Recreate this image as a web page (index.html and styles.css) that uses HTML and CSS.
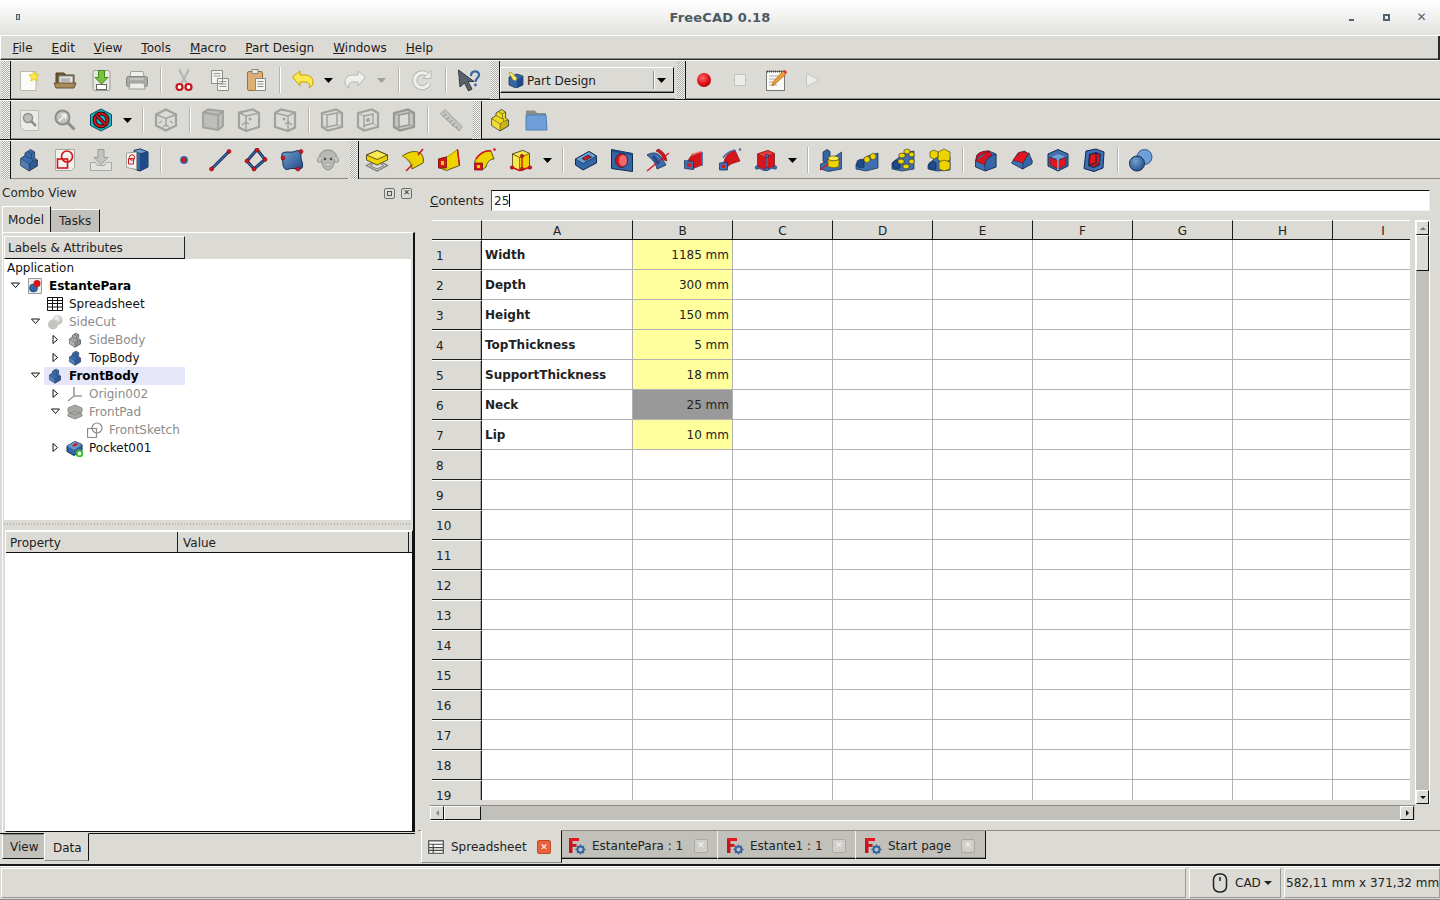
FILE: index.html
```html
<!DOCTYPE html>
<html lang="en">
<head>
<meta charset="utf-8">
<title>FreeCAD 0.18</title>
<link rel="stylesheet" href="styles.css">
</head>
<body>
<svg class="defs" xmlns="http://www.w3.org/2000/svg">
<defs>
<radialGradient id="gRec" cx=".4" cy=".35" r=".7"><stop offset="0" stop-color="#ff6a6a"/><stop offset=".6" stop-color="#e0151b"/><stop offset="1" stop-color="#a00"/></radialGradient>
<linearGradient id="gBlue" x1="0" y1="0" x2="1" y2="1"><stop offset="0" stop-color="#729fcf"/><stop offset="1" stop-color="#204a87"/></linearGradient>
<radialGradient id="gSph" cx=".4" cy=".35" r=".75"><stop offset="0" stop-color="#729fcf"/><stop offset="1" stop-color="#204a87"/></radialGradient>
<radialGradient id="gSph2" cx=".4" cy=".35" r=".75"><stop offset="0" stop-color="#f4f4f2"/><stop offset="1" stop-color="#b0b0ac"/></radialGradient>
</defs>
<symbol id="new" viewBox="0 0 24 24"><path d="M3.500 3.500H19V22.500H3.500Z" fill="#fbfbf8" stroke="#b9b9b2"/><path d="M17 3.500l1.500 3 3.500.5-2.500 2.400.7 3.600-3.200-1.700-3.200 1.700.7-3.600L12 7l3.500-.5z" fill="#fce94f" stroke="#e0c400" stroke-width=".8"/></symbol>
<symbol id="open" viewBox="0 0 24 24"><path d="M3 5h8l2 2h8v9H3z" fill="#6f5632" stroke="#54401f"/><rect x="6" y="8" width="14" height="9" fill="#e6e6e2" stroke="#888"/><path d="M8 11h9M8 13h9" stroke="#888"/><path d="M1 15h22l-2 5H3z" fill="#a98a5a" stroke="#6a5230"/></symbol>
<symbol id="save" viewBox="0 0 24 24"><rect x="4" y="2.500" width="17" height="20" rx="2" fill="#e8e8e3" stroke="#9a9a94"/><rect x="7.500" y="16.500" width="10" height="5" fill="#fff" stroke="#666"/><path d="M9.500 2.500h6v7h3.500l-6.500 6.500L6 9.500h3.500z" fill="#7ac143" stroke="#3d8a13"/></symbol>
<symbol id="print" viewBox="0 0 24 24"><path d="M6 3.500h12l1 5H5z" fill="#f0f0ee" stroke="#a0a09c"/><rect x="1.500" y="8.500" width="21" height="10" rx="2" fill="#a9a9a5" stroke="#82827e"/><path d="M5 15l-1 6h16l-1-6z" fill="#ecece8" stroke="#9a9a96"/><path d="M5 11h14" stroke="#ddd"/></symbol>
<symbol id="cut" viewBox="0 0 24 24"><path d="M7 1.500L15 16M17 1.500L9 16" stroke="#b6b6b2" stroke-width="2.400"/><circle cx="7.500" cy="19" r="3" fill="#fff" stroke="#c8141c" stroke-width="2.200"/><circle cx="16.500" cy="19" r="3" fill="#fff" stroke="#c8141c" stroke-width="2.200"/></symbol>
<symbol id="copy" viewBox="0 0 24 24"><path d="M3.500 2.500h11v13h-11zM9.500 10.500h11v12h-11z" fill="#f4f4f0" stroke="#8c8c88"/><path d="M5.500 5.500h7M5.500 8h7M11.500 13.500h7M11.500 16h7M11.500 18.500h7" stroke="#999"/></symbol>
<symbol id="paste" viewBox="0 0 24 24"><rect x="3.500" y="3.500" width="15" height="19" rx="1.500" fill="#dcb074" stroke="#9a7238"/><rect x="8" y="1.500" width="6" height="4" fill="#e8e8e4" stroke="#888"/><path d="M11.500 10.500h10v12h-10z" fill="#f6f6f4" stroke="#888"/><path d="M13.500 13.500h6M13.500 16h6M13.500 18.500h6" stroke="#888"/></symbol>
<symbol id="undo" viewBox="0 0 24 24"><path d="M1.500 9L9 3v4h5c5 0 8 3 8 7 0 3-2 5-4 6 1-2 1-6-4-6H9v4z" fill="#fce94f" stroke="#c4a000"/></symbol>
<symbol id="redo" viewBox="0 0 24 24"><path d="M22.500 9L15 3v4h-5c-5 0-8 3-8 7 0 3 2 5 4 6-1-2-1-6 4-6h5v4z" fill="#efefec" stroke="#b6b6b2"/></symbol>
<symbol id="refresh" viewBox="0 0 24 24"><path d="M19 15.500a7.500 7.500 0 1 1-1-8" fill="none" stroke="#b4b4b0" stroke-width="5"/><path d="M19 15.500a7.500 7.500 0 1 1-1-8" fill="none" stroke="#f0f0ee" stroke-width="3"/><path d="M21 2.500v8h-8z" fill="#f0f0ee" stroke="#b4b4b0"/></symbol>
<symbol id="help" viewBox="0 0 24 24"><path d="M1.500 2L3 19l4.500-4 4 8 3.500-2-4-7.500H17z" fill="#59616a" stroke="#333b44"/><path d="M14 8c0-6 8-6 8-1 0 3-3.500 3-3.500 7" fill="none" stroke="#3465a4" stroke-width="2.200"/><circle cx="18.500" cy="17" r="1.400" fill="#3465a4"/></symbol>
<symbol id="pdwb" viewBox="0 0 16 16"><path d="M1 5l8-3 6 2v9l-7 3-7-3z" fill="#3465a4" stroke="#0b2a55" stroke-width=".7"/><path d="M9 8l6-4v9l-6 3z" fill="#204a87"/><path d="M1 1l2-1 6 6-1 3-3-1z" fill="#fce94f" stroke="#665" stroke-width=".5"/></symbol>
<symbol id="rec" viewBox="0 0 24 24"><circle cx="12" cy="12" r="7" fill="url(#gRec)"/></symbol>
<symbol id="stop" viewBox="0 0 24 24"><rect x="6.500" y="6.500" width="11" height="11" fill="#ececea" stroke="#c4c4c0"/></symbol>
<symbol id="macro" viewBox="0 0 24 24"><rect x="2.500" y="3.500" width="18" height="19" fill="#fafaf6" stroke="#777"/><path d="M3 3.500h17" stroke="#444" stroke-dasharray="1 1" stroke-width="2"/><path d="M5 8h11M5 11h8M5 14h6M5 17h8" stroke="#aaa"/><path d="M8 18l1-4L19 3l3 3-11 10z" fill="#f09d33" stroke="#a8641a" stroke-width=".7"/><path d="M19 3l3 3 1-2-2-2z" fill="#d33"/></symbol>
<symbol id="play" viewBox="0 0 24 24"><path d="M6.500 5.500L19 12 6.500 18.500z" fill="#ededea" stroke="#c4c4c0"/></symbol>
<symbol id="fitall" viewBox="0 0 24 24"><path d="M3.500 2.500h18v20H7l-3.500-3z" fill="#eaeae6" stroke="#bcbcb8"/><circle cx="11" cy="10" r="4.500" fill="#bdbdb9" stroke="#8e8e8a" stroke-width="1.500"/><path d="M14 13l5 5" stroke="#8e8e8a" stroke-width="2.500"/></symbol>
<symbol id="fitsel" viewBox="0 0 24 24"><circle cx="9.500" cy="9.500" r="7" fill="#c2c2be" stroke="#8e8e8a" stroke-width="2"/><path d="M14.500 14.500l7 7" stroke="#8e8e8a" stroke-width="3"/><path d="M6 13l6-6M8 6.500h4.500V11" fill="none" stroke="#f4f4f2" stroke-width="1.600"/></symbol>
<symbol id="style" viewBox="0 0 24 24"><path d="M12 1l10.500 5.500v11L12 23 1.500 17.500v-11z" fill="#1fb3c2" stroke="#0a4a55"/><circle cx="12" cy="12" r="6.500" fill="none" stroke="#111" stroke-width="4"/><circle cx="12" cy="12" r="6.500" fill="none" stroke="#d5141c" stroke-width="2.200"/><path d="M7.500 7.500l9 9" stroke="#111" stroke-width="3.500"/><path d="M7.500 7.500l9 9" stroke="#d5141c" stroke-width="2"/></symbol>
<symbol id="viso" viewBox="0 0 24 24"><path d="M12 1.500l10 5v11l-10 5-10-5v-11z" fill="none" stroke="#a2a29e" stroke-width="2.200"/><path d="M2 6.500l10 4 10-4M12 10.500v6M5 15l3-2M19 15l-3-2M9 19l3-2 3 2" fill="none" stroke="#a2a29e" stroke-width="1.500"/></symbol>
<symbol id="vfront" viewBox="0 0 24 24"><path d="M2 4.500l5-3 15 1.500v15l-5 4-15-2.500z" fill="#bdbdb9" stroke="#a0a09c" stroke-width="1.800"/><path d="M2 4.500l15 2.500v15.500M17 7l5-4" fill="none" stroke="#a0a09c" stroke-width="1.800"/></symbol>
<symbol id="vtop" viewBox="0 0 24 24"><path d="M2 4.500l14-3 6 3.500v14l-13 4-7-3.500z" fill="none" stroke="#a2a29e" stroke-width="2.200"/><path d="M2 4.500l7 3.500 13-3M9 8v15M5 17l4-3 3 2" fill="none" stroke="#a2a29e" stroke-width="1.500"/><circle cx="13" cy="11" r="1.500" fill="#a2a29e"/></symbol>
<symbol id="vright" viewBox="0 0 24 24"><path d="M22 4.500l-14-3-6 3.500v14l13 4 7-3.500z" fill="none" stroke="#a2a29e" stroke-width="2.200"/><path d="M22 4.500l-7 3.500L2 5M15 8v15M19 17l-4-3-3 2" fill="none" stroke="#a2a29e" stroke-width="1.500"/><circle cx="11" cy="11" r="1.500" fill="#a2a29e"/></symbol>
<symbol id="vrear" viewBox="0 0 24 24"><path d="M2 5l14-3.500 6 3.500v14l-14 3.500L2 19z" fill="none" stroke="#a2a29e" stroke-width="2.200"/><path d="M7 7l10-2v12L7 19z" fill="none" stroke="#a2a29e" stroke-width="1.500"/><path d="M2 5l5 2M22 5l-5 0M22 19l-5-2M2 19l5 0" stroke="#a2a29e"/></symbol>
<symbol id="vbot" viewBox="0 0 24 24"><path d="M2 5l14-3.500 6 3.500v14l-14 3.500L2 19z" fill="none" stroke="#a2a29e" stroke-width="2.200"/><path d="M8 8l9-2v9l-9 3z" fill="none" stroke="#a2a29e" stroke-width="1.500"/><circle cx="12" cy="12" r="2" fill="#a2a29e"/><path d="M2 5l6 3M22 19l-5-4M8 22.500V18" stroke="#a2a29e"/></symbol>
<symbol id="vleft" viewBox="0 0 24 24"><path d="M2 5l14-3.500 6 3.500v14l-14 3.500L2 19z" fill="#c6c6c2" stroke="#969692" stroke-width="2.200"/><path d="M7 7l10-2v12L7 19z" fill="#dcdad5" stroke="#969692" stroke-width="1.500"/><path d="M2 5l5 2M22 5l-5 0M22 19l-5-2M2 19l5 0" stroke="#969692"/></symbol>
<symbol id="ruler" viewBox="0 0 24 24"><path d="M1.500 6L6 1.500l17 17-3 4.500z" fill="#c2c2be" stroke="#a0a09c"/><path d="M7 6l-2 2M10 9l-3 3M13 12l-2 2M16 15l-3 3M19 18l-2 2" stroke="#8e8e8a"/></symbol>
<symbol id="step" viewBox="-3 0 30 24" preserveAspectRatio="none"><path d="M10 3.500L14 1.500l5 2.500v6l3.500 2v6L12 23 1.500 17.500v-7L7 7.500V5z" fill="currentColor" stroke="#1a2430" stroke-opacity=".8"/><path d="M12 23v-7L1.500 10.500M12 16l4.500-2.500v-3.500M22.500 12l-6 1.500M10 3.500l5 2.500 4-2M15 6v5L7 7.500" fill="none" stroke="#1a2430" stroke-opacity=".55"/><path d="M12 16l10.500-4v6.500L12 23z" fill="#000" fill-opacity=".16"/><path d="M1.500 10.500L12 16v7L1.500 17.500z" fill="#fff" fill-opacity=".12"/></symbol>
<symbol id="folder" viewBox="0 0 24 24"><path d="M2 2.500h9l2 2.500h9v7H2z" fill="#8c8c88"/><path d="M2 7h20l1 15H2z" fill="#6f9fd8" stroke="#4e7fb8"/></symbol>
<symbol id="sketch" viewBox="0 0 24 24"><path d="M2.500 1.500h19v18l-3 3h-16z" fill="#f2f2ee" stroke="#a8a8a4"/><rect x="4.500" y="11" width="10" height="9" fill="none" stroke="#d5141c" stroke-width="1.600"/><circle cx="14" cy="8.500" r="5.500" fill="none" stroke="#d5141c" stroke-width="1.600"/></symbol>
<symbol id="import" viewBox="0 0 24 24"><path d="M9 1.500h6v8h4l-7 7-7-7h4z" fill="#c4c4c0" stroke="#9a9a96"/><path d="M1.500 14.500v8h21v-8h-5l-2 3H8.500l-2-3z" fill="#e2e2de" stroke="#a6a6a2"/></symbol>
<symbol id="pagecube" viewBox="0 0 24 24"><path d="M9 2.500l6-1.500 8 3v15l-8 4-6-2z" fill="#3465a4" stroke="#10294f"/><path d="M15 5.500l8-1.500v15l-8 4z" fill="#204a87"/><path d="M9 2.500l6 3 8-1.500-8-3z" fill="#729fcf" stroke="#10294f" stroke-width=".6"/><path d="M1.500 5l10-1v17.500l-10-2z" fill="#f2f2ee" stroke="#a0a09c"/><path d="M3.500 10.500h5v5.500h-5z" fill="none" stroke="#d5141c"/><circle cx="7" cy="9.500" r="2.700" fill="none" stroke="#d5141c"/></symbol>
<symbol id="point" viewBox="0 0 24 24"><circle cx="12" cy="12" r="3.200" fill="#c8141c" stroke="#3d68a6" stroke-width="1.600"/></symbol>
<symbol id="line" viewBox="0 0 24 24"><path d="M3.500 21L21 3.500" stroke="#10294f" stroke-width="3"/><path d="M3.500 21L21 3.500" stroke="#3d68a6" stroke-width="1.600"/><circle cx="3.500" cy="21" r="2" fill="#d5141c" stroke="#7a0f12" stroke-width=".6"/><circle cx="21" cy="3.500" r="2" fill="#d5141c" stroke="#7a0f12" stroke-width=".6"/></symbol>
<symbol id="cs" viewBox="0 0 24 24"><path d="M3 13L13 1.500 21 11.500 10 21z" fill="none" stroke="#10294f" stroke-width="3"/><path d="M3 13L13 1.500 21 11.500 10 21z" fill="none" stroke="#3d68a6" stroke-width="1.400"/><g fill="#d5141c" stroke="#7a0f12" stroke-width=".6"><circle cx="13" cy="2" r="2"/><circle cx="21" cy="11.500" r="2"/><circle cx="10" cy="21" r="2"/><circle cx="3" cy="13" r="2"/></g></symbol>
<symbol id="plane" viewBox="0 0 24 24"><path d="M2 5.500c4-3 9 0 14-2.500 3-1 5 0 5 3-1 6 3 9 1 14-4 3-9-1-13 1-4 2-6-2-6-5 0-4-2-6-1-10.500z" fill="url(#gBlue)" stroke="#10294f"/><g fill="#d5141c" stroke="#7a0f12" stroke-width=".6"><circle cx="3" cy="10" r="2"/><circle cx="21" cy="3.500" r="2"/><circle cx="18" cy="21" r="2"/></g></symbol>
<symbol id="sheep" viewBox="0 0 24 24"><path d="M5 5c3-4 11-4 14 0 2 2 2 5 0 7-1 5-3 10-7 10S6 17 5 12c-2-2-2-5 0-7z" fill="#b8b8b4" stroke="#8c8c88"/><path d="M5 8c-3 0-4 4-3 6 2 1 4-1 4-3M19 8c3 0 4 4 3 6-2 1-4-1-4-3" fill="#c8c8c4" stroke="#8c8c88"/><circle cx="9" cy="11" r="1.300" fill="#555"/><circle cx="15" cy="11" r="1.300" fill="#555"/><path d="M9 16c1 2.500 5 2.500 6 0-1-1-5-1-6 0z" fill="#e8e8e4" stroke="#8c8c88" stroke-width=".7"/></symbol>
<symbol id="pad" viewBox="0 0 24 24"><path d="M1.500 17.500L12 12l10.500 5.500L12 23z" fill="none" stroke="#7a7a76" stroke-width="1.300"/><path d="M5 17.500L12 14l7 3.500-7 3.500z" fill="none" stroke="#7a7a76"/><path d="M1.500 7L12 2.500 22.500 7v5L12 17 1.500 12z" fill="#edd400" stroke="#3a3410" stroke-width=".8"/><path d="M1.500 7L12 11.500 22.500 7 12 2.500z" fill="#fce94f" stroke="#3a3410" stroke-width=".8"/></symbol>
<symbol id="rev" viewBox="0 0 24 24"><path d="M1.500 8C8 3 16 2 20.500 6 22.500 9 23 13 22 15L11 21C11 16 7 11 1.500 8z" fill="#edd400" stroke="#3a3410" stroke-width=".8"/><path d="M1.500 8c5 2 9 6 10 9" fill="none" stroke="#c4a000"/><path d="M5 23l6-6M17 7l5-6" stroke="#c8141c" stroke-width="1.500"/></symbol>
<symbol id="loft" viewBox="0 0 24 24"><path d="M1.500 11l8-2 11-7.500 2 16-13 5-8-3z" fill="#edd400" stroke="#3a3410" stroke-width=".8"/><path d="M9.500 9l11-7.500-1 0 -9.500 6z" fill="#fce94f"/><path d="M1.500 11l8-2v11l-8 0z" fill="#d5141c" stroke="#7a0f12" stroke-width=".8"/><path d="M4 13h3v4H4z" fill="#edd400"/><path d="M20.500 1.500l2 16" stroke="#d5141c" stroke-width="1.500"/></symbol>
<symbol id="pipe" viewBox="0 0 24 24"><path d="M1.500 14C4 7 11 2 18 3l3 8c-4 0-7 3-8 8l-4 3z" fill="#edd400" stroke="#3a3410" stroke-width=".8"/><path d="M1.500 15h8v7h-8z" fill="#d5141c" stroke="#7a0f12" stroke-width=".8"/><path d="M4 17h3v3H4z" fill="#edd400"/><path d="M3 11C6 6 12 2 18 3" fill="none" stroke="#d5141c" stroke-width="1.500"/><circle cx="21.500" cy="1.500" r="1.300" fill="#d5141c"/></symbol>
<symbol id="prim" viewBox="0 0 24 24"><path d="M3.500 6L14 2.500l6.500 3v14l-10 3-7-3z" fill="#edd400" stroke="#3a3410" stroke-width=".8"/><path d="M3.500 6l7 3.500L20.500 5.500 14 2.500z" fill="#fce94f" stroke="#3a3410" stroke-width=".6"/><path d="M10.500 9.500v13l-7-3V6z" fill="#fce94f" stroke="#3a3410" stroke-width=".6"/><path d="M13 8v13M3.500 19.500l7 3 10-3" fill="none" stroke="#d5141c" stroke-width="1.400"/><g fill="#d5141c" stroke="#7a0f12" stroke-width=".5"><circle cx="13" cy="8" r="1.800"/><circle cx="3" cy="19.500" r="1.800"/><circle cx="13" cy="21" r="1.800"/><circle cx="21" cy="19.500" r="1.800"/></g></symbol>
<symbol id="pocket" viewBox="0 0 24 24"><path d="M1.500 11L15 3.500l7.500 4.500V15L9 22l-7.500-5z" fill="#3465a4" stroke="#10294f"/><path d="M1.500 11L9 15.500 22.500 8 15 3.500z" fill="#729fcf" stroke="#10294f" stroke-width=".7"/><path d="M8 10.500l6-3.500 3.500 2-6 3.500z" fill="#d5141c" stroke="#10294f" stroke-width=".7"/></symbol>
<symbol id="hole" viewBox="0 0 24 24"><path d="M1.500 1.500l21 4v18l-21-3z" fill="#3465a4" stroke="#10294f"/><path d="M1.500 1.500l21 4v2l-21-4z" fill="#204a87"/><ellipse cx="11.500" cy="12.500" rx="6" ry="7" fill="#d5141c" stroke="#10294f" stroke-width=".8"/><ellipse cx="13" cy="12.500" rx="4" ry="5.500" fill="#ef6a6a"/></symbol>
<symbol id="groove" viewBox="0 0 24 24"><path d="M1 7c5-3 11-3 14 2l5 8-9 4C10 15 6 11 1 7z" fill="#3f6fb0" stroke="#10294f" stroke-width=".8"/><path d="M10 3c3 1 6 4 8 9l3 1c-1-6-4-10-9-12z" fill="#d5141c" stroke="#7a0f12" stroke-width=".6"/><path d="M1 23l22-18" stroke="#d5141c" stroke-width="1.300"/><path d="M7 8l6 8" stroke="#204a87" stroke-width="3"/></symbol>
<symbol id="subloft" viewBox="0 0 24 24"><path d="M5 14l4-6 11-4v13l-10 4z" fill="#d5141c" stroke="#7a0f12" stroke-width=".6"/><path d="M9 8l11-4-1-1-10 3z" fill="#ef6a6a"/><path d="M2.500 12.500l9 1v8l-9-1z" fill="#3f6fb0" stroke="#10294f" stroke-width=".7"/><path d="M5 15l4 .5v3.500l-4-.5z" fill="#d5141c"/><path d="M20 4v14" stroke="#3f6fb0" stroke-width="1.500"/></symbol>
<symbol id="subpipe" viewBox="0 0 24 24"><path d="M6 14C7 8 11 4 17 2l5 11-9 3-4 3z" fill="#d5141c" stroke="#7a0f12" stroke-width=".6"/><path d="M1.500 15l8-1v8l-8 0z" fill="#3f6fb0" stroke="#10294f" stroke-width=".7"/><path d="M4 17l3 0v3H4z" fill="#d5141c"/><path d="M5 10C8 5 12 3 17 2" fill="none" stroke="#3f6fb0" stroke-width="1.500"/><circle cx="22" cy="1.500" r="1.300" fill="#3f6fb0"/></symbol>
<symbol id="subprim" viewBox="0 0 24 24"><path d="M3.500 6L14 2.500l6.500 3v14l-10 3-7-3z" fill="#d5141c" stroke="#7a0f12" stroke-width=".7"/><path d="M10.500 9.500L20.500 5.500 14 2.500 3.500 6z" fill="#ef3a3a" stroke="#7a0f12" stroke-width=".5"/><path d="M13 8v13M3.500 19.500l7 3 10-3" fill="none" stroke="#3f6fb0" stroke-width="1.400"/><g fill="#3f6fb0" stroke="#10294f" stroke-width=".5"><circle cx="13" cy="8" r="1.800"/><circle cx="3" cy="19.500" r="1.800"/><circle cx="13" cy="21" r="1.800"/><circle cx="21" cy="19.500" r="1.800"/></g></symbol>
<symbol id="mirror" viewBox="0 0 24 24"><path d="M1.500 16L11 12l11.500-8v17l-13 2.500L1.500 21z" fill="#3f6fb0" stroke="#10294f" stroke-width=".7"/><path d="M4 4L8 1.500l3 2v6l-6 5-1-2z" fill="#3465a4" stroke="#10294f" stroke-width=".7"/><ellipse cx="14.500" cy="10.500" rx="5.500" ry="2.500" fill="#fce94f" stroke="#5a4d10" stroke-width=".7"/><path d="M9 10.500v7c0 3 11 3 11 0v-7c0 3-11 3-11 0z" fill="#edd400" stroke="#5a4d10" stroke-width=".7"/><path d="M1 22l8-6" stroke="#d5141c" stroke-width="1.300"/></symbol>
<symbol id="linear" viewBox="0 0 24 24"><path d="M1 16L13 8l10-3v15l-12 3-10-2z" fill="#3f6fb0" stroke="#10294f" stroke-width=".7"/><path d="M2 13l4-2 3 2v6l-4 1-3-2z" fill="#1f4a8c" stroke="#10294f" stroke-width=".7"/><g fill="#edd400" stroke="#3a3410" stroke-width=".6"><path d="M9 10l3-2 3 2v3l-3 2-3-2z"/><path d="M15 7l3-2 3 2v3l-3 2-3-2z"/></g></symbol>
<symbol id="polar" viewBox="0 0 24 24"><path d="M1 15L13 5l10-2v18l-12 2-10-2z" fill="#3f6fb0" stroke="#10294f" stroke-width=".7"/><path d="M2 14l3-2 4 2v6l-4 1-3-2z" fill="#1f4a8c" stroke="#10294f" stroke-width=".7"/><g fill="#edd400" stroke="#3a3410" stroke-width=".6"><path d="M13 2l3-1 3 1v3l-3 1-3-1z"/><path d="M18 5l3-1 2 1v3l-2 1-3-1z"/><path d="M8 6l3-1 3 1v3l-3 1-3-1z"/><path d="M7 12l3-1 3 1v3l-3 1-3-1z"/><path d="M18 12l3-1 2 1v3l-2 1-3-1z"/><path d="M12 17l3-1 3 1v3l-3 1-3-1z"/></g></symbol>
<symbol id="multi" viewBox="0 0 24 24"><path d="M1 17L9 9h14v13l-13 1-9-2z" fill="#3f6fb0" stroke="#10294f" stroke-width=".7"/><g fill="#edd400" stroke="#3a3410" stroke-width=".6"><path d="M11 4l6-3 6 3v8l-6 3-6-3z"/><path d="M3 4l4-2 4 2v5l-4 2-4-2z"/><path d="M12 14l5-2 6 2v7l-6 2-5-2z"/></g><path d="M2 15l4-2 3 2v6l-4 1-3-2z" fill="#1f4a8c" stroke="#10294f" stroke-width=".7"/></symbol>
<symbol id="fillet" viewBox="0 0 24 24"><path d="M1.500 13L3 7c3-3 7-4 12-4l7 3v13l-11 4-9.500-4z" fill="#3f6fb0" stroke="#10294f" stroke-width=".8"/><path d="M2 13C4 8 8 6 15 4c-1-1-1-1 0-1C9 3 3 5 2.500 9L2 13l9 4c0-4 3-8 7-9.500L15 3" fill="#d5141c" stroke="#7a0f12" stroke-width=".6"/><path d="M11 17c0-4 3-8 11-11v13l-11 4z" fill="#3465a4" stroke="#10294f" stroke-width=".6"/></symbol>
<symbol id="chamfer" viewBox="0 0 24 24"><path d="M1.500 15l11 6 9.500-6v-3L15 3l-7 2z" fill="#3f6fb0" stroke="#10294f" stroke-width=".8"/><path d="M3 12l7-8 9 1-6 10z" fill="#e6141c" stroke="#7a0f12" stroke-width=".6"/><path d="M13 15l6-10 3 8v3l-9.500 5z" fill="#3465a4" stroke="#10294f" stroke-width=".6"/></symbol>
<symbol id="draft" viewBox="0 0 24 24"><path d="M12 1.500l10 4.500v12l-10 5-10-5V6z" fill="#3f6fb0" stroke="#10294f"/><path d="M5 9l7-3 8 3-8 2z" fill="#729fcf"/><path d="M4 9l7.500 3.500V21L4 17z" fill="#e6141c" stroke="#10294f" stroke-width=".6"/><path d="M12.500 12.500L20 9v8l-7.500 4z" fill="#e6141c" stroke="#10294f" stroke-width=".6"/><path d="M12 11v11" stroke="#fff" stroke-width=".8"/></symbol>
<symbol id="thick" viewBox="0 0 24 24"><path d="M4 3l10-2 8 3-1 16-9 3.500-10-3z" fill="#3f6fb0" stroke="#10294f"/><path d="M7 6l7-2 5 2-1 11-6 3-6-2z" fill="#10294f"/><path d="M8.500 7l5-1.500v9l-6 2z" fill="#e6141c"/><path d="M14.500 5.500l3.500 1-.5 9.500-3-1.500zM8 17.500l6-2.500 3 1-5 3z" fill="#c8141c"/></symbol>
<symbol id="bool" viewBox="0 0 24 24"><circle cx="15.500" cy="9" r="7.500" fill="#6f9fd8" stroke="#33598f"/><circle cx="8" cy="15.500" r="7.500" fill="url(#gSph)" stroke="#10294f"/></symbol>
<symbol id="arrowdown" viewBox="0 0 12 8"><path d="M1 2h9L5.500 7z" fill="#000"/></symbol>
<symbol id="arrowgrey" viewBox="0 0 12 8"><path d="M1 2h9L5.500 7z" fill="#a0a09c"/></symbol>
<symbol id="tdown" viewBox="0 0 10 10"><path d="M.5 2h8l-4 4.500z" fill="#fff" stroke="#111"/></symbol>
<symbol id="tright" viewBox="0 0 10 10"><path d="M2 .5v8l4.500-4z" fill="#fff" stroke="#111"/></symbol>
<symbol id="tdoc" viewBox="0 0 16 16"><path d="M1.500 .5h13v15h-13z" fill="#ededea" stroke="#9a9a96"/><circle cx="6.500" cy="10" r="4" fill="#2f65ad" stroke="#0e2a55" stroke-width=".6"/><circle cx="10" cy="5.500" r="3.500" fill="#d5141c"/></symbol>
<symbol id="tsheet" viewBox="0 0 16 16"><path d="M.5 1.500h15v13H.5zM.5 4.500h15M.5 7.500h15M.5 11h15M5.500 1.500v13M10.500 1.500v13" fill="#fff" stroke="#111"/></symbol>
<symbol id="tsheetgrey" viewBox="0 0 16 16"><path d="M1.500 2.500h13v11h-13zM1.500 5.500h13M1.500 8.500h13M1.500 11h13M5.500 5.500v8" fill="#fff" stroke="#444"/></symbol>
<symbol id="tcut" viewBox="0 0 16 16"><circle cx="10.500" cy="6" r="5" fill="url(#gSph2)"/><circle cx="6" cy="10.500" r="5" fill="#c4c4c0"/></symbol>
<symbol id="torigin" viewBox="0 0 16 16"><path d="M7 1v9L1 15M7 10l8 0" fill="none" stroke="#9a9a96" stroke-width="1.600"/></symbol>
<symbol id="tpad" viewBox="0 0 16 16"><path d="M1 4l7-3 7 3v4l-7 3-7-3zM1 10l7-3 7 3v2l-7 3-7-3z" fill="#a8a8a4" stroke="#8c8c88"/></symbol>
<symbol id="tsketch" viewBox="0 0 16 16"><rect x=".5" y="6.500" width="9" height="9" fill="none" stroke="#8c8c88" stroke-width="1.200"/><circle cx="10" cy="6" r="5" fill="none" stroke="#8c8c88" stroke-width="1.200"/></symbol>
<symbol id="tpocket" viewBox="0 0 18 18"><path d="M1 7l8-4.500 7 3v6l-8 5-7-4z" fill="#3465a4" stroke="#10294f"/><path d="M1 7l7 4 8-5.500-7-3z" fill="#6a94c8"/><path d="M6 6.500l4-2.500 2.500 1-4 2.500z" fill="#d5141c"/><circle cx="13.500" cy="14.500" r="2.800" fill="#fff" stroke="#2ec022" stroke-width="1.800"/></symbol>
<symbol id="fc" viewBox="0 0 18 18"><rect x="1" y="1" width="3.500" height="15" fill="#c8141c"/><rect x="1" y="1" width="10" height="3" fill="#e6141c"/><rect x="1" y="7" width="7.500" height="2.800" fill="#c8141c"/><g fill="none" stroke="#3465a4"><circle cx="12.500" cy="12.500" r="3" stroke-width="2"/><path d="M12.500 7.500v2M12.500 15.500v2M7.500 12.500h2M15.500 12.500h2M9 9l1.500 1.500M14.500 14.500L16 16M9 16l1.500-1.500M14.500 10.500L16 9" stroke-width="1.400"/></g></symbol>
<symbol id="mouse" viewBox="0 0 16 20"><rect x="1.500" y="1" width="13" height="18" rx="5.500" fill="none" stroke="#222" stroke-width="1.500"/><path d="M8 4v4" stroke="#222" stroke-width="1.500"/></symbol>
</svg>

<div class="app">
  <header class="titlebar">
    <span class="wmicon"></span>
    <span class="title">FreeCAD 0.18</span>
    <span class="wmbtns">
      <span class="wb wb-min"></span>
      <span class="wb wb-max"></span>
      <span class="wb wb-close">✕</span>
    </span>
  </header>

  <nav class="menubar">
    <span class="mi"><u>F</u>ile</span>
    <span class="mi"><u>E</u>dit</span>
    <span class="mi"><u>V</u>iew</span>
    <span class="mi"><u>T</u>ools</span>
    <span class="mi"><u>M</u>acro</span>
    <span class="mi"><u>P</u>art Design</span>
    <span class="mi"><u>W</u>indows</span>
    <span class="mi"><u>H</u>elp</span>
  </nav>

  <div class="toolrow">
    <div class="tb tb-a1">
      <span class="grip"></span>
      <span class="ic"><svg class="i"><use href="#new"/></svg></span>
      <span class="ic"><svg class="i"><use href="#open"/></svg></span>
      <span class="ic"><svg class="i"><use href="#save"/></svg></span>
      <span class="ic"><svg class="i"><use href="#print"/></svg></span>
      <span class="sep"></span>
      <span class="ic"><svg class="i"><use href="#cut"/></svg></span>
      <span class="ic"><svg class="i"><use href="#copy"/></svg></span>
      <span class="ic"><svg class="i"><use href="#paste"/></svg></span>
      <span class="sep"></span>
      <span class="ic"><svg class="i"><use href="#undo"/></svg></span>
      <span class="drop drop-n"><svg class="a"><use href="#arrowdown"/></svg></span>
      <span class="ic"><svg class="i"><use href="#redo"/></svg></span>
      <span class="drop drop-w"><svg class="a"><use href="#arrowgrey"/></svg></span>
      <span class="sep"></span>
      <span class="ic"><svg class="i"><use href="#refresh"/></svg></span>
      <span class="sep"></span>
      <span class="ic"><svg class="i"><use href="#help"/></svg></span>
    </div>
    <div class="tb tb-a2">
      <span class="grip grip-s"></span>
      <div class="combo">
        <svg class="ci"><use href="#pdwb"/></svg>
        <span class="combotext">Part Design</span>
        <span class="combobtn"><svg class="a"><use href="#arrowdown"/></svg></span>
      </div>
    </div>
    <div class="tb tb-a3">
      <span class="grip"></span>
      <span class="ic"><svg class="i"><use href="#rec"/></svg></span>
      <span class="ic"><svg class="i"><use href="#stop"/></svg></span>
      <span class="ic"><svg class="i"><use href="#macro"/></svg></span>
      <span class="ic"><svg class="i"><use href="#play"/></svg></span>
    </div>
  </div>

  <div class="toolrow">
    <div class="tb tb-b1">
      <span class="grip"></span>
      <span class="ic"><svg class="i"><use href="#fitall"/></svg></span>
      <span class="ic"><svg class="i"><use href="#fitsel"/></svg></span>
      <span class="ic ic-tight"><svg class="i"><use href="#style"/></svg></span>
      <span class="drop"><svg class="a"><use href="#arrowdown"/></svg></span>
      <span class="sep"></span>
      <span class="ic"><svg class="i"><use href="#viso"/></svg></span>
      <span class="sep"></span>
      <span class="ic"><svg class="i"><use href="#vfront"/></svg></span>
      <span class="ic"><svg class="i"><use href="#vtop"/></svg></span>
      <span class="ic"><svg class="i"><use href="#vright"/></svg></span>
      <span class="sep"></span>
      <span class="ic"><svg class="i"><use href="#vrear"/></svg></span>
      <span class="ic"><svg class="i"><use href="#vbot"/></svg></span>
      <span class="ic"><svg class="i"><use href="#vleft"/></svg></span>
      <span class="sep"></span>
      <span class="ic"><svg class="i"><use href="#ruler"/></svg></span>
    </div>
    <div class="tb">
      <span class="grip grip-s"></span>
      <span class="ic"><svg class="i c-yellow"><use href="#step"/></svg></span>
      <span class="ic"><svg class="i"><use href="#folder"/></svg></span>
    </div>
  </div>

  <div class="toolrow toolrow-last">
    <div class="tb tb-c1">
      <span class="grip"></span>
      <span class="ic"><svg class="i c-blue"><use href="#step"/></svg></span>
      <span class="ic"><svg class="i"><use href="#sketch"/></svg></span>
      <span class="ic"><svg class="i"><use href="#import"/></svg></span>
      <span class="ic"><svg class="i"><use href="#pagecube"/></svg></span>
      <span class="sep"></span>
      <span class="ic"><svg class="i"><use href="#point"/></svg></span>
      <span class="ic"><svg class="i"><use href="#line"/></svg></span>
      <span class="ic"><svg class="i"><use href="#cs"/></svg></span>
      <span class="ic"><svg class="i"><use href="#plane"/></svg></span>
      <span class="ic"><svg class="i"><use href="#sheep"/></svg></span>
    </div>
    <div class="tb">
      <span class="grip"></span>
      <span class="ic"><svg class="i"><use href="#pad"/></svg></span>
      <span class="ic"><svg class="i"><use href="#rev"/></svg></span>
      <span class="ic"><svg class="i"><use href="#loft"/></svg></span>
      <span class="ic"><svg class="i"><use href="#pipe"/></svg></span>
      <span class="ic"><svg class="i"><use href="#prim"/></svg></span>
      <span class="drop"><svg class="a"><use href="#arrowdown"/></svg></span>
      <span class="sep"></span>
      <span class="ic"><svg class="i"><use href="#pocket"/></svg></span>
      <span class="ic"><svg class="i"><use href="#hole"/></svg></span>
      <span class="ic"><svg class="i"><use href="#groove"/></svg></span>
      <span class="ic"><svg class="i"><use href="#subloft"/></svg></span>
      <span class="ic"><svg class="i"><use href="#subpipe"/></svg></span>
      <span class="ic"><svg class="i"><use href="#subprim"/></svg></span>
      <span class="drop"><svg class="a"><use href="#arrowdown"/></svg></span>
      <span class="sep"></span>
      <span class="ic"><svg class="i"><use href="#mirror"/></svg></span>
      <span class="ic"><svg class="i"><use href="#linear"/></svg></span>
      <span class="ic"><svg class="i"><use href="#polar"/></svg></span>
      <span class="ic"><svg class="i"><use href="#multi"/></svg></span>
      <span class="sep"></span>
      <span class="ic"><svg class="i"><use href="#fillet"/></svg></span>
      <span class="ic"><svg class="i"><use href="#chamfer"/></svg></span>
      <span class="ic"><svg class="i"><use href="#draft"/></svg></span>
      <span class="ic"><svg class="i"><use href="#thick"/></svg></span>
      <span class="sep"></span>
      <span class="ic"><svg class="i"><use href="#bool"/></svg></span>
    </div>
  </div>

  <main class="main">
    <aside class="left">
      <div class="dockhead">
        <span class="docktitle">Combo View</span>
        <span class="dockbtn"><span class="dockfloat"></span></span>
        <span class="dockbtn dockx">✕</span>
      </div>
      <div class="toptabs">
        <span class="ttab ttab-on">Model</span>
        <span class="ttab">Tasks</span>
      </div>
      <div class="pane">
        <div class="hdr">Labels &amp; Attributes</div>
        <div class="tree">
          <div class="tr">Application</div>
          <div class="tr l0 strong"><svg class="tw"><use href="#tdown"/></svg><svg class="ti"><use href="#tdoc"/></svg><span>EstantePara</span></div>
          <div class="tr l1 noarrow"><svg class="ti"><use href="#tsheet"/></svg><span>Spreadsheet</span></div>
          <div class="tr l1 dim"><svg class="tw"><use href="#tdown"/></svg><svg class="ti"><use href="#tcut"/></svg><span>SideCut</span></div>
          <div class="tr l2 dim"><svg class="tw"><use href="#tright"/></svg><svg class="ti c-grey"><use href="#step"/></svg><span>SideBody</span></div>
          <div class="tr l2"><svg class="tw"><use href="#tright"/></svg><svg class="ti c-blue"><use href="#step"/></svg><span>TopBody</span></div>
          <div class="tr l1 strong sel"><svg class="tw"><use href="#tdown"/></svg><svg class="ti c-blue"><use href="#step"/></svg><span>FrontBody</span></div>
          <div class="tr l2 dim"><svg class="tw"><use href="#tright"/></svg><svg class="ti"><use href="#torigin"/></svg><span>Origin002</span></div>
          <div class="tr l2 dim"><svg class="tw"><use href="#tdown"/></svg><svg class="ti"><use href="#tpad"/></svg><span>FrontPad</span></div>
          <div class="tr l3 noarrow dim"><svg class="ti"><use href="#tsketch"/></svg><span>FrontSketch</span></div>
          <div class="tr l2"><svg class="tw"><use href="#tright"/></svg><svg class="ti ti-lg"><use href="#tpocket"/></svg><span>Pocket001</span></div>
        </div>
        <div class="splitter"></div>
        <div class="props">
          <div class="prophead">
            <span class="pcol pcol-a">Property</span>
            <span class="pcol pcol-b">Value</span>
          </div>
        </div>
      </div>
      <div class="bottabs">
        <span class="btab">View</span>
        <span class="btab btab-on">Data</span>
      </div>
    </aside>

    <section class="right">
      <div class="formula">
        <span class="flabel"><u>C</u>ontents</span>
        <div class="finput">25<span class="caret"></span></div>
      </div>
      <div class="sheetbox">
        <div class="tablewrap">
          <table class="sheet">
            <colgroup><col class="c0"><col class="ca"><col class="cn"><col class="cn"><col class="cn"><col class="cn"><col class="cn"><col class="cn"><col class="cn"><col class="cn"></colgroup>
            <thead><tr><th class="corner"></th><th>A</th><th>B</th><th>C</th><th>D</th><th>E</th><th>F</th><th>G</th><th>H</th><th>I</th></tr></thead>
            <tbody>
              <tr><th>1</th><td class="k">Width</td><td class="v">1185 mm</td><td></td><td></td><td></td><td></td><td></td><td></td><td></td></tr>
              <tr><th>2</th><td class="k">Depth</td><td class="v">300 mm</td><td></td><td></td><td></td><td></td><td></td><td></td><td></td></tr>
              <tr><th>3</th><td class="k">Height</td><td class="v">150 mm</td><td></td><td></td><td></td><td></td><td></td><td></td><td></td></tr>
              <tr><th>4</th><td class="k">TopThickness</td><td class="v">5 mm</td><td></td><td></td><td></td><td></td><td></td><td></td><td></td></tr>
              <tr><th>5</th><td class="k">SupportThickness</td><td class="v">18 mm</td><td></td><td></td><td></td><td></td><td></td><td></td><td></td></tr>
              <tr><th>6</th><td class="k">Neck</td><td class="v cur">25 mm</td><td></td><td></td><td></td><td></td><td></td><td></td><td></td></tr>
              <tr><th>7</th><td class="k">Lip</td><td class="v">10 mm</td><td></td><td></td><td></td><td></td><td></td><td></td><td></td></tr>
              <tr><th>8</th><td></td><td></td><td></td><td></td><td></td><td></td><td></td><td></td><td></td></tr>
              <tr><th>9</th><td></td><td></td><td></td><td></td><td></td><td></td><td></td><td></td><td></td></tr>
              <tr><th>10</th><td></td><td></td><td></td><td></td><td></td><td></td><td></td><td></td><td></td></tr>
              <tr><th>11</th><td></td><td></td><td></td><td></td><td></td><td></td><td></td><td></td><td></td></tr>
              <tr><th>12</th><td></td><td></td><td></td><td></td><td></td><td></td><td></td><td></td><td></td></tr>
              <tr><th>13</th><td></td><td></td><td></td><td></td><td></td><td></td><td></td><td></td><td></td></tr>
              <tr><th>14</th><td></td><td></td><td></td><td></td><td></td><td></td><td></td><td></td><td></td></tr>
              <tr><th>15</th><td></td><td></td><td></td><td></td><td></td><td></td><td></td><td></td><td></td></tr>
              <tr><th>16</th><td></td><td></td><td></td><td></td><td></td><td></td><td></td><td></td><td></td></tr>
              <tr><th>17</th><td></td><td></td><td></td><td></td><td></td><td></td><td></td><td></td><td></td></tr>
              <tr><th>18</th><td></td><td></td><td></td><td></td><td></td><td></td><td></td><td></td><td></td></tr>
              <tr><th>19</th><td></td><td></td><td></td><td></td><td></td><td></td><td></td><td></td><td></td></tr>
            </tbody>
          </table>
        </div>
        <div class="vscroll">
          <span class="sb sb-up"><i class="tri tri-up"></i></span>
          <span class="vthumb"></span>
          <span class="sb sb-down"><i class="tri tri-down"></i></span>
        </div>
        <div class="hscroll">
          <span class="sb sb-left"><i class="tri tri-left"></i></span>
          <span class="hthumb"></span>
          <span class="sb sb-right"><i class="tri tri-right"></i></span>
        </div>
      </div>
      <div class="doctabs">
        <span class="dt dt-on dt1"><svg class="dti"><use href="#tsheetgrey"/></svg><span class="dtt">Spreadsheet</span><span class="dtx dtx-on">✕</span></span>
        <span class="dt dt2"><svg class="dti"><use href="#fc"/></svg><span class="dtt">EstantePara : 1</span><span class="dtx">✕</span></span>
        <span class="dt dt3"><svg class="dti"><use href="#fc"/></svg><span class="dtt">Estante1 : 1</span><span class="dtx">✕</span></span>
        <span class="dt dt4"><svg class="dti"><use href="#fc"/></svg><span class="dtt">Start page</span><span class="dtx">✕</span></span>
      </div>
    </section>
  </main>

  <footer class="status">
    <span class="sp sp-main"></span>
    <span class="sp sp-mode"><svg class="mouse"><use href="#mouse"/></svg>CAD<i class="modearrow"></i></span>
    <span class="sp sp-coord">582,11 mm x 371,32 mm</span>
  </footer>
</div>
</body>
</html>
```

FILE: styles.css
```css
* { box-sizing: border-box; }
html, body { margin: 0; width: 1440px; height: 900px; overflow: hidden; }
body { background: #dcdad5; color: #1c1c1c; font: 12px/1 "DejaVu Sans", sans-serif; }
.defs { display: block; width: 0; height: 0; }
.app { display: flex; flex-direction: column; width: 1440px; height: 900px; }

.c-blue { color: #3a6cb0; }
.c-yellow { color: #f0d91a; }
.c-grey { color: #a8a8a4; }

/* title bar */
.titlebar { flex: 0 0 36px; display: grid; grid-template-columns: 1fr auto 1fr; align-items: center; padding-bottom: 1px; background: linear-gradient(#ffffff, #e2e2e0); border-bottom: 1px solid #fff; }
.wmicon { width: 4px; height: 6px; margin-left: 16px; background: #4e636f; border: 1px solid #4e636f; box-shadow: inset 0 0 0 1px #c0c8cc; }
.title { font-size: 13px; font-weight: bold; color: #4d5a62; letter-spacing: .15px; }
.wmbtns { display: flex; justify-content: flex-end; padding-right: 1px; }
.wb { width: 35px; height: 14px; display: flex; align-items: center; justify-content: center; color: #4e636f; font-size: 12px; font-weight: bold; }
.wb-min::before { content: ""; width: 5px; height: 2px; margin-top: 5px; background: #4e636f; }
.wb-max::before { content: ""; width: 3px; height: 3px; border: 2px solid #4e636f; }

/* menu */
.menubar { flex: 0 0 24px; display: flex; align-items: center; padding: 0 2px 0 2px; border-left: 1px solid #fff; border-right: 2px solid #2a2a2a; border-bottom: 1px solid #2a2a2a; box-shadow: inset 0 -1px #8b8a86; }
.mi { padding: 0 9.5px; color: #1c1c1c; }

/* toolbars */
.toolrow { flex: 0 0 40px; display: flex; border-top: 1px solid #fbfbfa; border-bottom: 1px solid #111; box-shadow: inset 0 -1px #8b8a86; }
.toolrow-last { border-bottom-color: #dcdad5; }
.tb { display: flex; align-items: center; height: 38px; }
.tb-a1 { flex: 0 0 490px; }
.tb-a2 { flex: 0 0 185px; }
.tb-b1 { flex: 0 0 472px; }
.tb-c1 { flex: 0 0 348px; }
.grip { flex: none; align-self: stretch; width: 11px; border-left: 2px solid #dcdad5; border-right: 1px solid #111; box-shadow: inset -1px 0 #dcdad5; background: repeating-conic-gradient(#f8f8f6 0 25%, #aaa9a4 0 50%) 0 0 / 2px 2px; }
.grip-s { width: 10px; border-left-width: 1px; }
.ic { flex: 0 0 36px; height: 24px; display: flex; justify-content: center; }
.ic-tight { padding-right: 1px; }
.i { width: 24px; height: 24px; display: block; }
.sep { flex: 0 0 11px; height: 26px; }
.sep::before { content: ""; display: block; width: 2px; height: 26px; margin-left: 5px; background: linear-gradient(90deg, #b4b3ae 50%, #fff 50%); }
.drop { flex: 0 0 18px; display: flex; padding-left: 3px; }
.drop-n { flex-basis: 16px; padding-left: 2px; }
.drop-w { flex-basis: 20px; padding-left: 3px; }
.a { width: 12px; height: 8px; display: block; }
.combo { flex: 0 0 174px; height: 26px; display: flex; align-items: center; padding-left: 7px; border: 1px solid; border-color: #fff #111 #111 #fff; box-shadow: inset 0 -1px #8b8a86; }
.ci { width: 16px; height: 16px; margin-right: 3px; }
.combotext { flex: 1; padding-top: 1px; }
.combobtn { flex: 0 0 20px; height: 18px; padding-left: 2px; margin-right: 0; display: flex; align-items: center; border-left: 1px solid #888; box-shadow: inset 1px 0 #fff; }

/* main */
.main { flex: 0 0 685px; display: flex; border-bottom: 2px solid #1a1a1a; }
.left { flex: 0 0 416px; display: flex; flex-direction: column; }
.dockhead { flex: 0 0 26px; display: flex; align-items: center; padding: 0 0 0 2px; }
.docktitle { flex: 1; color: #2a2a2a; }
.dockbtn { flex: none; width: 11px; height: 11px; margin: 0 3px; border: 1px solid #6f6f6b; border-radius: 2px; display: flex; align-items: center; justify-content: center; font-size: 8px; font-weight: bold; color: #333; }
.dockx { margin-right: 4px; }
.dockfloat { width: 5px; height: 5px; border: 1px solid #555; }
.toptabs { flex: 0 0 26px; display: flex; align-items: flex-end; padding-left: 2px; }
.ttab { height: 23px; padding: 5px 0 0 7px; background: #c2c0ba; border-top: 1px solid #fff; border-right: 1px solid #111; border-left: 1px solid #c2c0ba; color: #222; width: 49px; }
.ttab-on { height: 26px; padding: 7px 0 0 5px; background: #dcdad5; border-left: 1px solid #fff; width: 49px; }
.pane { flex: 0 0 600px; width: 413px; margin-left: 2px; padding: 3px 1px 0 1px; border-top: 1px solid #fff; border-left: 1px solid #fff; border-right: 2px solid #111; }
.hdr { height: 23px; width: 181px; padding: 5px 0 0 3px; border: 1px solid; border-color: #fff #222 #111 #fff; color: #222; }
.tree { height: 261px; width: 407px; background: #fff; }
.tr { height: 18px; display: flex; align-items: center; padding-left: 3px; color: #111; white-space: nowrap; }
.tw { flex: none; width: 10px; height: 10px; }
.ti { flex: none; width: 16px; height: 16px; margin: 0 6px 0 6px; }
.ti-lg { width: 18px; height: 18px; margin: 0 5px 0 5px; }
.l0 { padding-left: 7px; }
.l1 { padding-left: 27px; }
.l2 { padding-left: 47px; }
.l3 { padding-left: 67px; }
.noarrow { padding-left: 43px; }
.l3.noarrow { padding-left: 83px; }
.noarrow .ti { margin-left: 0; margin-right: 6px; }
.strong { font-weight: bold; color: #000; }
.dim { color: #8c8c8c; }
.sel { background: linear-gradient(90deg, transparent 40px, #e6e6fa 40px, #e6e6fa 181px, transparent 181px); }
.splitter { height: 10px; background: repeating-linear-gradient(90deg, #b9b8b3 0 1px, transparent 1px 3px) 0 3px / 100% 2px no-repeat; }
.props { height: 302px; width: 408px; margin-left: 1px; border: 1px solid; border-color: #fff #111 #111 #fff; background: #fff; }
.prophead { display: flex; height: 22px; background: #dcdad5; border-bottom: 1px solid #111; border-top: 1px solid #fff; }
.pcol { padding: 5px 0 0 4px; border-right: 1px solid #222; color: #222; }
.pcol-a { flex: 0 0 172px; }
.pcol-b { flex: 0 0 231px; padding-left: 5px; }
.bottabs { display: flex; padding-left: 2px; height: 29px; margin-top: 1px; width: 415px; border-top: 1px solid #111; }
.btab { height: 25px; width: 42px; padding: 6px 0 0 7px; background: #c2c0ba; border: 1px solid; border-color: #888 #c2c0ba #111 #fff; }
.btab-on { width: 45px; height: 28px; padding: 8px 0 0 8px; background: #dcdad5; border-color: #dcdad5 #111 #888 #fff; margin-top: -1px; }

/* right */
.right { flex: 1; display: flex; flex-direction: column; padding-left: 14px; min-width: 0; }
.formula { display: flex; align-items: center; margin-top: 10px; height: 21px; }
.flabel { flex: 0 0 61px; padding-top: 1px; color: #222; }
.finput { flex: 0 0 939px; height: 21px; background: #fff; border: 1px solid; border-color: #111 #f2f2f0 #f2f2f0 #555; display: flex; align-items: center; padding-left: 2px; color: #222; }
.caret { display: block; width: 1px; height: 13px; background: #000; }
.sheetbox { margin-top: 9px; width: 1001px; height: 601px; display: grid; grid-template-columns: 985px 16px; grid-template-rows: 585px 16px; }
.tablewrap { height: 580px; width: 980px; padding-left: 2px; overflow: hidden; }
.sheet { border-collapse: separate; border-spacing: 0; table-layout: fixed; width: 1001px; background: #fff; }
.c0 { width: 50px; }
.ca { width: 151px; }
.cn { width: 100px; }
.sheet thead th { height: 20px; background: #dcdad5; border-top: 1px solid #fff; border-right: 1px solid #1a1a1a; border-bottom: 1px solid #1a1a1a; font-weight: normal; color: #222; padding: 1px 0 0; text-align: center; }
.sheet thead th:last-child { border-right: 0; }
.sheet tbody th { height: 30px; background: #dcdad5; font-weight: normal; text-align: left; padding: 1px 0 0 4px; color: #222; border-right: 1px solid #1a1a1a; border-bottom: 1px solid #1a1a1a; border-top: 1px solid #fff; box-shadow: inset -1px 0 #a8a7a2; }
.sheet td { height: 30px; padding: 0 3px; border-right: 1px solid #b2b2b2; border-bottom: 1px solid #b2b2b2; color: #222; white-space: nowrap; overflow: hidden; }
.k { font-weight: bold; color: #111; }
.v { text-align: right; background: #ffff9e; }
.cur { background: #999; color: #eee; }
.vscroll { display: flex; flex-direction: column; background: #c2c0ba; width: 15px; height: 584px; border-left: 1px solid #fff; border-right: 1px solid #fff; border-top: 1px solid #fff; }
.sb { flex: none; display: flex; align-items: center; justify-content: center; background: #dcdad5; border: 1px solid; border-color: #fff #111 #111 #fff; }
.sb-up, .sb-down { height: 14px; width: 13px; }
.vthumb { flex: none; width: 13px; height: 36px; background: #dcdad5; border: 1px solid; border-color: #fff #111 #111 #fff; }
.sb-down { margin-top: auto; }
.hscroll { grid-column: 1 / 2; display: flex; align-items: stretch; background: #c2c0ba; height: 16px; width: 985px; border-top: 1px solid #8b8a86; border-bottom: 1px solid #fff; padding-right: 1px; }
.sb-left, .sb-right { width: 14px; }
.hthumb { flex: none; width: 37px; background: #dcdad5; border: 1px solid; border-color: #fff #111 #111 #fff; }
.sb-right { margin-left: auto; }
.tri { display: block; width: 0; height: 0; border: 3px solid transparent; }
.tri-up { border-bottom-color: #777; border-top-width: 0; }
.tri-down { border-top-color: #111; border-bottom-width: 0; }
.tri-left { border-right-color: #888; border-left-width: 0; }
.tri-right { border-left-color: #111; border-right-width: 0; }

.doctabs { flex: none; margin: 9px 0 0 -12px; height: 34px; width: 1022px; display: flex; padding-left: 3px; border-top: 1px solid #8b8a86; align-items: flex-start; }
.dt { display: flex; align-items: center; height: 28px; padding: 2px 0 0 6px; background: #c2c0ba; border-right: 1px solid #f4f4f2; border-bottom: 1px solid #111; box-shadow: inset 0 -1px #8b8a86; }
.dt-on { height: 33px; background: #dcdad5; margin-top: -1px; padding: 1px 0 0 5px; border-left: 1px solid #fff; border-top: 1px solid #dcdad5; border-right: 1px solid #111; border-bottom: 1px solid #888; box-shadow: none; }
.dt1 { width: 141px; }
.dt2 { width: 156px; }
.dt3 { width: 138px; padding-left: 8px; }
.dt4 { width: 130px; padding-left: 8px; border-right-color: #111; }
.dti { flex: none; width: 18px; height: 18px; margin-right: 6px; }
.dtt { flex: 1; color: #222; white-space: nowrap; }
.dtx { flex: none; width: 14px; height: 14px; margin-right: 10px; display: flex; align-items: center; justify-content: center; font-size: 9px; font-weight: bold; line-height: 1; color: #f4f4f2; background: #d0cec9; border: 1px solid #aaa9a4; border-radius: 2px; }
.dt2 .dtx, .dt3 .dtx { margin-right: 9px; }
.dtx-on { background: #e8613c; border-color: #c24a28; color: #fff; }

/* status */
.status { flex: 1; display: flex; padding: 1px 0 1px 1px; border-top: 1px solid #fff; border-bottom: 1px solid #8b8a86; }
.sp { display: flex; align-items: center; border: 1px solid; border-color: #fff #9a9995 #9a9995 #fff; margin-right: 3px; color: #222; }
.sp-main { flex: 0 0 1185px; }
.sp-mode { flex: 0 0 92px; padding-left: 22px; }
.sp-coord { flex: 1; padding-left: 1px; margin-right: 0; white-space: nowrap; }
.mouse { width: 16px; height: 20px; margin-right: 7px; }
.modearrow { width: 0; height: 0; margin-left: 3px; border: 4px solid transparent; border-top-color: #222; border-bottom-width: 0; }
```
